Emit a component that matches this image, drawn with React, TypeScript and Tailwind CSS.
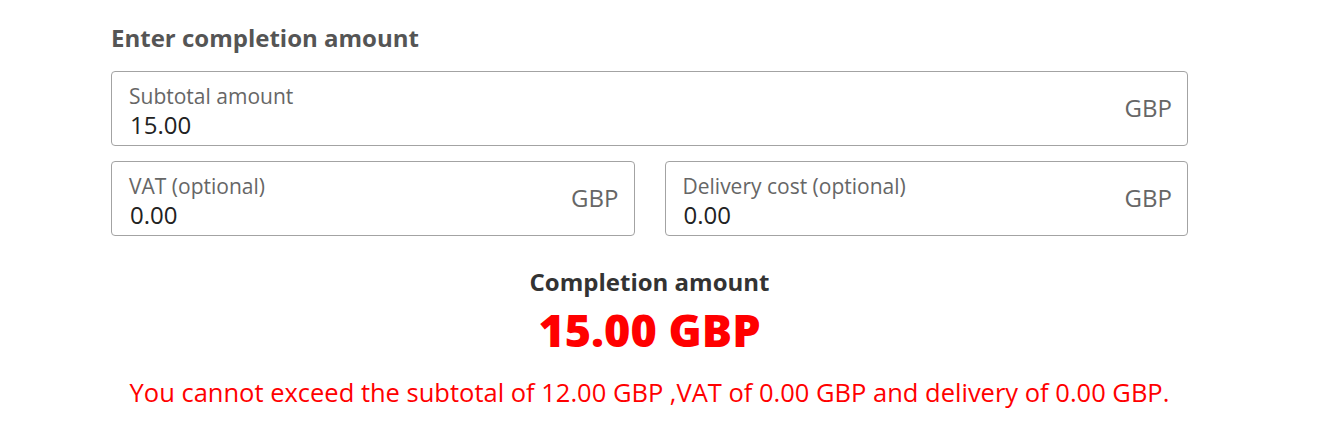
import React from 'react';

function AmountField({ label, value }: { label: string; value: string }) {
  return (
    <div className="flex h-[75px] rounded-[4px] border border-[#a3a3a3] bg-white pl-[17px] pr-[15px]">
      <div className="flex flex-1 flex-col pt-[12px]">
        <span className="text-[21px] leading-[24px] text-[#666]">{label}</span>
        <span className="mt-[3px] pl-[1px] text-[24px] leading-[28px] text-[#222]">{value}</span>
      </div>
      <span className="mb-[2px] self-center text-[24px] leading-[30px] text-[#666]">GBP</span>
    </div>
  );
}

export default function App() {
  return (
    <div className="min-h-[442px] bg-white font-['Open_Sans',sans-serif]">
      <div className="ml-[111px] w-[1077px] pt-[23px]">
        <h2 className="text-[24px] font-bold leading-[30px] text-[#555]">Enter completion amount</h2>

        <div className="mt-[18px] flex flex-col gap-[15px]">
          <AmountField label="Subtotal amount" value="15.00" />
          <div className="grid grid-cols-2 gap-[30px]">
            <AmountField label="VAT (optional)" value="0.00" />
            <AmountField label="Delivery cost (optional)" value="0.00" />
          </div>
        </div>

        <div className="mt-[29px] flex flex-col items-center text-center">
          <div className="text-[24px] font-bold leading-[34px] text-[#333]">Completion amount</div>
          <div className="mt-[3px] text-[45px] font-extrabold leading-[56px] text-[#ff0000]">15.00 GBP</div>
          <p className="mt-[19px] text-[25.5px] leading-[30px] text-[#ff0000]">
            You cannot exceed the subtotal of 12.00 GBP ,VAT of 0.00 GBP and delivery of 0.00 GBP.
          </p>
        </div>
      </div>
    </div>
  );
}
